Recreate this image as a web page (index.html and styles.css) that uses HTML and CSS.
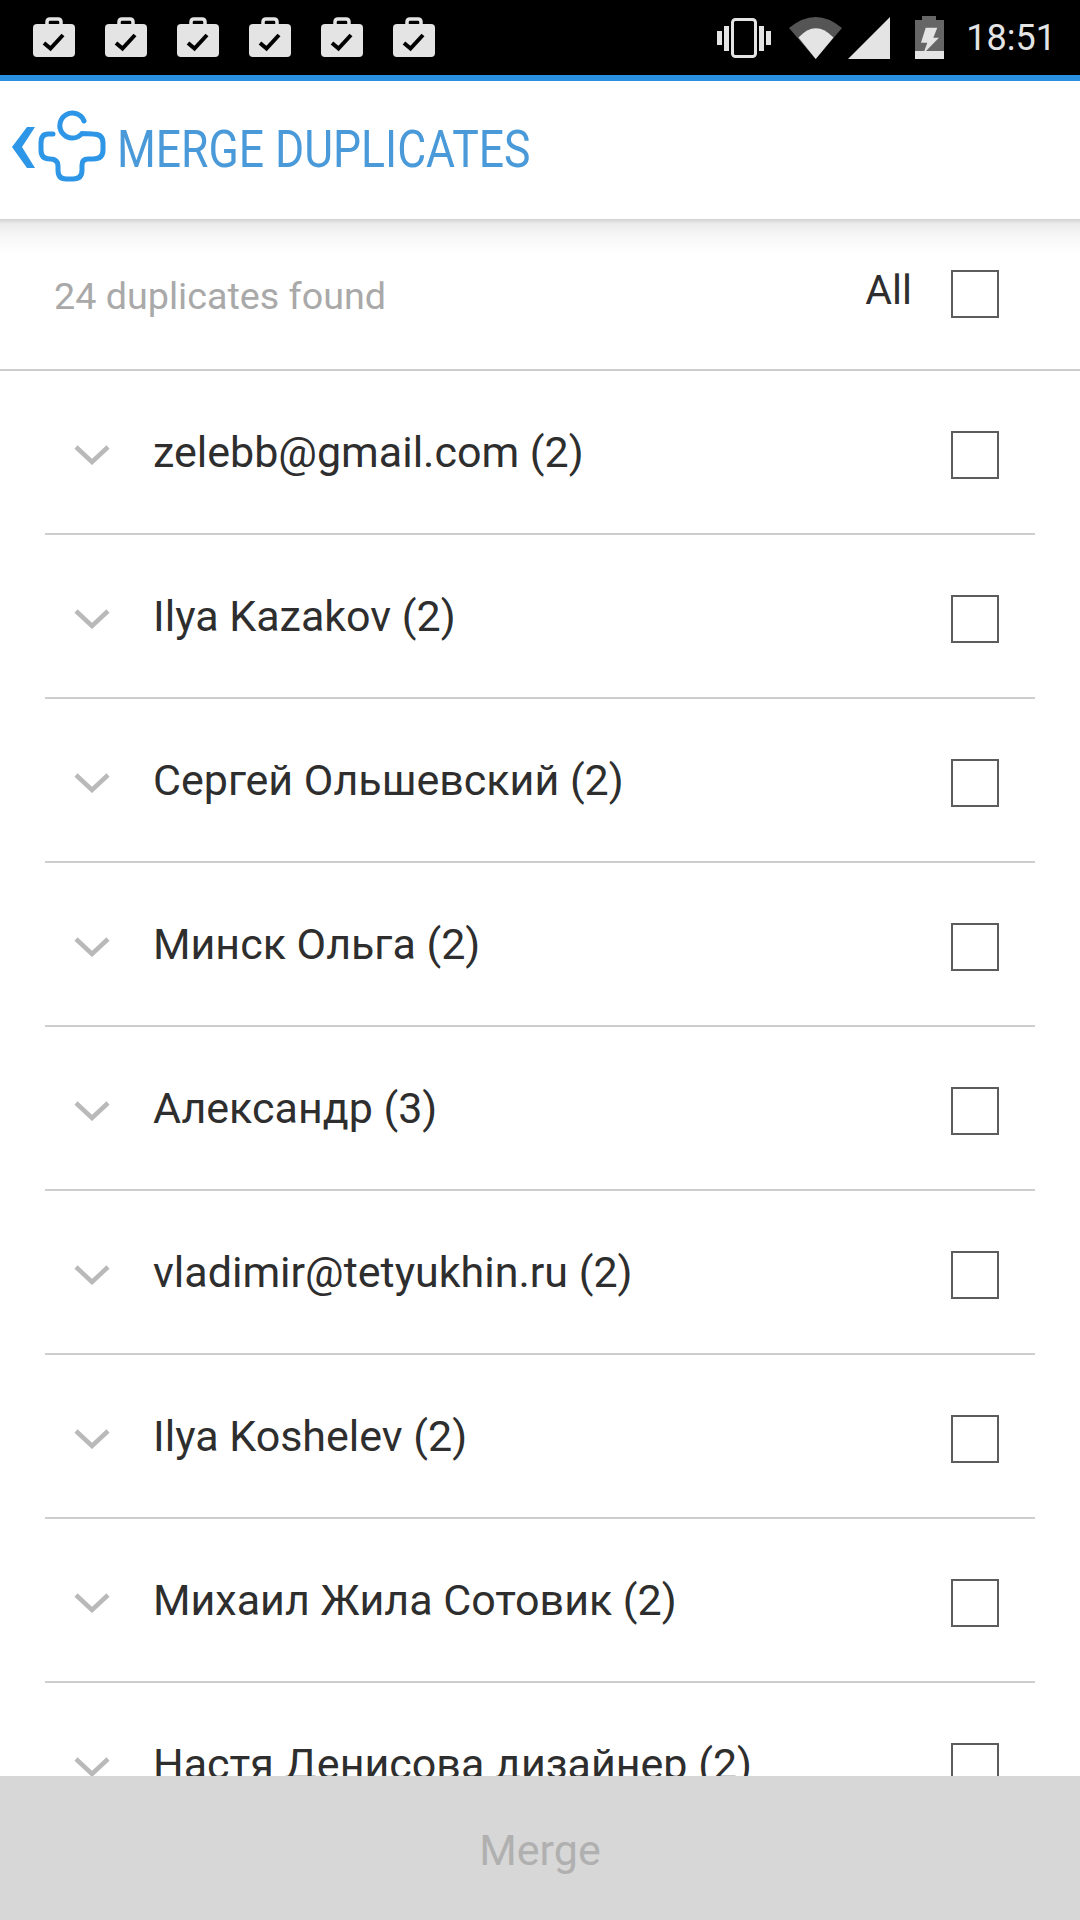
FILE: index.html
```html
<!DOCTYPE html>
<html lang="en">
<head>
  <meta charset="UTF-8" />
  <meta name="viewport" content="width=device-width, initial-scale=1.0" />
  <title>Merge duplicates</title>
  <link rel="stylesheet" href="styles.css">
</head>
<body>
  <svg class="defs" width="0" height="0">
    <symbol id="case" viewBox="0 0 42 40">
      <rect x="0" y="7" width="42" height="33" rx="4" fill="#e4e4e4"/>
      <path d="M14 8V5Q14 2 17 2H25Q28 2 28 5V8" fill="none" stroke="#e4e4e4" stroke-width="3.5"/>
      <path d="M11 26L17.5 31.5L30 18" fill="none" stroke="#000" stroke-width="4"/>
    </symbol>
    <symbol id="chevron" viewBox="0 0 36 20">
      <path d="M2 2L18 17L34 2" fill="none" stroke="#b9b9b9" stroke-width="4.5"/>
    </symbol>
  </svg>

  <div class="status-bar">
    <div class="status-left">
      <svg class="case-icon"><use href="#case"/></svg>
      <svg class="case-icon"><use href="#case"/></svg>
      <svg class="case-icon"><use href="#case"/></svg>
      <svg class="case-icon"><use href="#case"/></svg>
      <svg class="case-icon"><use href="#case"/></svg>
      <svg class="case-icon"><use href="#case"/></svg>
    </div>
    <div class="status-right">
      <svg class="vibrate-icon" width="54" height="40" viewBox="0 0 54 40">
        <rect x="0" y="13" width="5" height="14" fill="#e4e4e4"/>
        <rect x="7" y="8" width="5" height="25" fill="#e4e4e4"/>
        <rect x="15.5" y="1.5" width="23" height="37" rx="3" fill="none" stroke="#e4e4e4" stroke-width="3"/>
        <rect x="42" y="8" width="5" height="25" fill="#e4e4e4"/>
        <rect x="49" y="13" width="5" height="14" fill="#e4e4e4"/>
      </svg>
      <svg class="wifi-icon" width="53" height="42" viewBox="0 0 53 42">
        <path d="M0 11Q26.7 -11 53 11L26.7 42Z" fill="#555"/>
        <path d="M9.5 20.5Q26.7 2 44.5 20.5L26.7 42Z" fill="#e4e4e4"/>
      </svg>
      <svg class="signal-icon" width="42" height="42" viewBox="0 0 42 42">
        <polygon points="0,42 42,42 42,0" fill="#e4e4e4"/>
      </svg>
      <svg class="battery-icon" width="29" height="43" viewBox="0 0 29 43">
        <rect x="7" y="0" width="14" height="5" fill="#666"/>
        <rect x="0" y="4" width="29" height="31" fill="#666"/>
        <rect x="0" y="35" width="29" height="8" fill="#e4e4e4"/>
        <polygon points="10.7,11.7 22.3,11.7 18.3,21.7 24,21.7 8.3,37.7 12.3,26.7 6,26.7" fill="#e4e4e4"/>
      </svg>
      <span class="clock">18:51</span>
    </div>
  </div>

  <div class="app-bar">
    <svg class="logo" width="110" height="90" viewBox="0 105 110 90">
      <polygon points="27,127 35,127 22,147 35,168 27,168 12,147" fill="#2e96e6"/>
      <path d="M84 121A12.500 12.500 0 1 0 82 133.500L93 134Q103 134 103 143V150Q103 159 93 159H88Q82 159 82 165V170Q82 179 73 179H66Q58 179 58 170V166Q58 159 50 159Q41 159 41 150V143Q41 134 48 134H53" fill="none" stroke="#2e96e6" stroke-width="5" stroke-linecap="round"/>
    </svg>
    <h1 class="title">MERGE DUPLICATES</h1>
  </div>

  <div class="summary">
    <span class="found">24 duplicates found</span>
    <span class="all-label">All</span>
    <span class="checkbox"></span>
  </div>

  <div class="list">
    <div class="row">
      <svg class="chevron"><use href="#chevron"/></svg>
      <span class="name">zelebb@gmail.com (2)</span>
      <span class="checkbox"></span>
    </div>
    <div class="row">
      <svg class="chevron"><use href="#chevron"/></svg>
      <span class="name">Ilya Kazakov (2)</span>
      <span class="checkbox"></span>
    </div>
    <div class="row">
      <svg class="chevron"><use href="#chevron"/></svg>
      <span class="name">Сергей Ольшевский (2)</span>
      <span class="checkbox"></span>
    </div>
    <div class="row">
      <svg class="chevron"><use href="#chevron"/></svg>
      <span class="name">Минск Ольга (2)</span>
      <span class="checkbox"></span>
    </div>
    <div class="row">
      <svg class="chevron"><use href="#chevron"/></svg>
      <span class="name">Александр (3)</span>
      <span class="checkbox"></span>
    </div>
    <div class="row">
      <svg class="chevron"><use href="#chevron"/></svg>
      <span class="name">vladimir@tetyukhin.ru (2)</span>
      <span class="checkbox"></span>
    </div>
    <div class="row">
      <svg class="chevron"><use href="#chevron"/></svg>
      <span class="name">Ilya Koshelev (2)</span>
      <span class="checkbox"></span>
    </div>
    <div class="row">
      <svg class="chevron"><use href="#chevron"/></svg>
      <span class="name">Михаил Жила Сотовик (2)</span>
      <span class="checkbox"></span>
    </div>
    <div class="row">
      <svg class="chevron"><use href="#chevron"/></svg>
      <span class="name">Настя Денисова дизайнер (2)</span>
      <span class="checkbox"></span>
    </div>
  </div>

  <div class="merge-bar">Merge</div>
</body>
</html>
```

FILE: styles.css
```css
html, body {
  margin: 0;
  height: 1920px;
}
body {
  font-family: Roboto, "Noto Sans", sans-serif;
  background: white;
  display: flex;
  flex-direction: column;
  overflow: hidden;
}
.defs {
  position: absolute;
}
.status-bar {
  flex: none;
  height: 75px;
  background: black;
  display: flex;
  justify-content: space-between;
  padding: 0 24px 0 33px;
  box-sizing: border-box;
}
.status-left {
  display: flex;
  gap: 30px;
  padding-top: 17px;
}
.case-icon {
  width: 42px;
  height: 40px;
}
.status-right {
  display: flex;
  align-items: center;
}
.wifi-icon {
  margin-left: 18px;
}
.signal-icon {
  margin-left: 6px;
}
.battery-icon {
  margin-left: 25px;
}
.clock {
  margin-left: 22px;
  color: #e4e4e4;
  font-size: 36px;
}
.app-bar {
  flex: none;
  height: 138px;
  border-top: 6px solid #2b90e0;
  background: white;
  display: flex;
  align-items: center;
}
.title {
  margin: 0 0 2px 7px;
  font-size: 52px;
  font-weight: 400;
  color: #4a9ad9;
  white-space: nowrap;
  transform: scaleX(0.855);
  transform-origin: left center;
}
.summary {
  flex: none;
  height: 150px;
  border-bottom: 2px solid #cdcdcd;
  background: linear-gradient(#d2d2d2, #ececec 5px, #f6f6f6 16px, white 34px) no-repeat;
  display: flex;
  align-items: center;
  padding: 0 81px 0 54px;
}
.found {
  flex: 1;
  padding-top: 4px;
  font-size: 37.7px;
  color: #a9a9a9;
}
.all-label {
  margin-right: 39px;
  padding-bottom: 8px;
  font-size: 41px;
  color: #2e2e2e;
}
.checkbox {
  flex: none;
  width: 48px;
  height: 48px;
  box-sizing: border-box;
  border: 2px solid #5c5c5c;
}
.list {
  flex: 1;
  overflow: hidden;
  padding: 0 45px;
}
.row {
  height: 156px;
  border-bottom: 2px solid #cdcdcd;
  display: flex;
  align-items: center;
  padding: 6px 36px 0 29px;
}
.chevron {
  flex: none;
  width: 36px;
  height: 20px;
}
.name {
  flex: 1;
  margin-left: 43px;
  padding-bottom: 6px;
  font-size: 43px;
  color: #2e2e2e;
  white-space: nowrap;
}
.merge-bar {
  flex: none;
  height: 144px;
  padding-top: 4px;
  box-sizing: border-box;
  background: #d7d7d7;
  color: #b0b0b0;
  font-size: 43px;
  display: flex;
  align-items: center;
  justify-content: center;
}
```
